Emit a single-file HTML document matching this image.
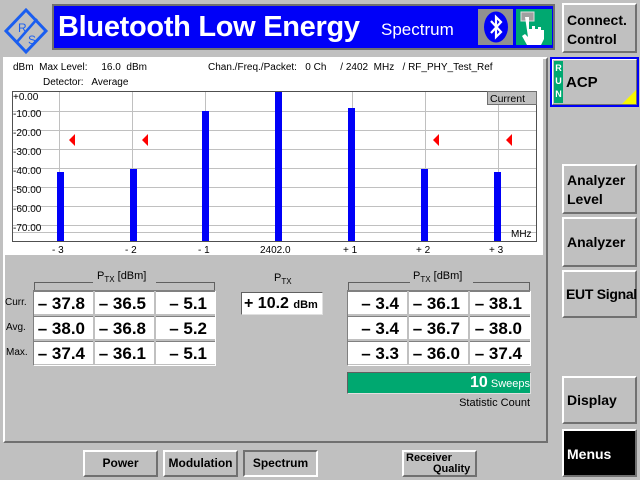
<!DOCTYPE html>
<html><head><meta charset="utf-8"><style>
*{margin:0;padding:0;box-sizing:border-box}
body{width:640px;height:480px;background:#c0c0c0;position:relative;overflow:hidden;font-family:"Liberation Sans",sans-serif;color:#000}
.a{position:absolute}
.btn{position:absolute;background:#c0c0c0;border:2px solid;border-color:#fff #707070 #707070 #fff;font-weight:bold;font-size:14px;line-height:18px;padding:4px 2px;white-space:nowrap}
.bb{position:absolute;background:#c0c0c0;border:2px solid;border-color:#fff #707070 #707070 #fff;font-weight:bold;font-size:12px;text-align:center}
.lbl{position:absolute;font-size:10px}
.cell{position:absolute;background:#fff;height:23px;font-size:17px;font-weight:bold;text-align:right;padding-right:8px;line-height:23px;border-top:1px solid #808080}
.sub{font-size:8px;vertical-align:-3px}
</style></head><body>
<!-- logo -->
<svg class="a" style="left:3px;top:7px" width="46" height="48" viewBox="0 0 46 48">
<g fill="none" stroke="#1a5ef0" stroke-width="3"><path d="M23 3 L43 24 L23 45 L3 24 Z"/><path d="M13 36 L34 12" stroke-width="2.5"/></g>
<text x="15" y="25" font-size="12" fill="#1a5ef0" font-family="Liberation Sans">R</text>
<text x="25" y="37" font-size="12" fill="#1a5ef0" font-family="Liberation Sans">S</text>
</svg>
<!-- title -->
<div class="a" style="left:52px;top:4px;width:503px;height:46px;background:#707070"></div>
<div class="a" style="left:54px;top:6px;width:499px;height:42px;background:#0000f8"></div>
<div class="a" style="left:58px;top:9px;color:#fff;font-size:29px;font-weight:bold;line-height:36px;white-space:nowrap;letter-spacing:-0.3px">Bluetooth Low Energy</div>
<div class="a" style="left:381px;top:19px;color:#fff;font-size:17px;line-height:22px;white-space:nowrap">Spectrum</div>
<div class="a" style="left:478px;top:9px;width:35px;height:36px;background:#909090"></div>
<svg class="a" style="left:483px;top:11px" width="26" height="32" viewBox="0 0 26 32"><ellipse cx="13" cy="16" rx="12" ry="15.5" fill="#0000f8"/><path d="M8 10 L18 21 L13 26 L13 6 L18 11 L8 22" fill="none" stroke="#fff" stroke-width="2.2"/></svg>
<div class="a" style="left:516px;top:9px;width:36px;height:36px;background:#00a870"></div>
<svg class="a" style="left:516px;top:9px" width="36" height="36" viewBox="0 0 36 36"><rect x="5" y="3" width="13" height="9" fill="#a0a0a0" stroke="#e0e0e0"/><path d="M9 8 h4 v12 h3 v-3 h3 v3 h3 v-2 h3 v3 h3 v9 l-3 6 h-14 l-5 -9 l3 -2 l3 3 z" fill="#fff"/></svg>
<!-- right buttons -->
<div class="btn" style="left:562px;top:3px;width:75px;height:50px;padding:6px 3px;line-height:19px">Connect.<br>Control</div>
<div class="a" style="left:550px;top:57px;width:89px;height:50px;background:#0000f8"></div>
<div class="a" style="left:552px;top:59px;width:85px;height:46px;background:#c0c0c0;border:1px solid;border-color:#fff #707070 #707070 #fff"></div>
<div class="a" style="left:554px;top:61px;width:9px;height:42px;background:#00a870;color:#fff;font-size:9px;font-weight:bold;line-height:13px;text-align:center;padding-top:1px">R<br>U<br>N</div>
<div class="a" style="left:566px;top:74px;font-size:15px;font-weight:bold">ACP</div>
<svg class="a" style="left:622px;top:90px" width="14" height="14"><path d="M14 0 L14 14 L0 14 Z" fill="#f8f800"/></svg>
<div class="btn" style="left:562px;top:164px;width:75px;height:50px;line-height:19px;padding:5px 3px">Analyzer<br>Level</div>
<div class="btn" style="left:562px;top:217px;width:75px;height:50px;padding:14px 3px">Analyzer</div>
<div class="btn" style="left:562px;top:270px;width:75px;height:48px;padding:13px 2px;letter-spacing:-0.3px">EUT Signal</div>
<div class="btn" style="left:562px;top:376px;width:75px;height:48px;padding:13px 3px">Display</div>
<div class="a" style="left:562px;top:429px;width:75px;height:48px;background:#000;color:#fff;font-weight:bold;font-size:14px;padding:15px 3px;border:2px solid #707070;border-left-color:#fff;border-top-color:#fff">Menus</div>
<!-- main panel -->
<div class="a" style="left:3px;top:57px;width:545px;height:386px;border:2px solid;border-color:#fff #707070 #707070 #fff"></div>
<div class="a" style="left:5px;top:59px;width:538px;height:196px;background:#fff"></div>
<div class="lbl" style="left:13px;top:62px;white-space:pre">dBm  Max Level:     16.0  dBm</div>
<div class="lbl" style="left:43px;top:77px;white-space:pre">Detector:   Average</div>
<div class="lbl" style="left:208px;top:62px;white-space:pre">Chan./Freq./Packet:   0 Ch     / 2402  MHz   / RF_PHY_Test_Ref</div>
<svg class="a" style="left:0;top:85px" width="545" height="172">
<g stroke="#c0c0c0" stroke-width="1">
<path d="M12.5 26.5H536 M12.5 45.5H536 M12.5 64.5H536 M12.5 83.5H536 M12.5 102.5H536 M12.5 121.5H536 M12.5 140.5H536 M12.5 147.5H536"/>
<path d="M59.5 6V156 M132.5 6V156 M205.5 6V156 M279.5 6V156 M352.5 6V156 M425.5 6V156 M498.5 6V156"/>
</g>
<path d="M12.5 6.5H536.5V156.5H12.5Z" fill="none" stroke="#505050"/>
<g fill="#0000f8">
<rect x="57" y="87" width="7" height="69"/><rect x="130" y="84" width="7" height="72"/><rect x="202" y="26" width="7" height="130"/><rect x="275" y="7" width="7" height="149"/><rect x="348" y="23" width="7" height="133"/><rect x="421" y="84" width="7" height="72"/><rect x="494" y="87" width="7" height="69"/>
</g>
<g fill="#f00"><path d="M69 55 L75 49 V61Z M142 55 L148 49 V61Z M433 55 L439 49 V61Z M506 55 L512 49 V61Z"/></g>
<rect x="487.5" y="6.5" width="49" height="13" fill="#c0c0c0" stroke="#707070"/>
<text x="490" y="17" font-size="10.5" font-family="Liberation Sans">Current</text>
<g font-size="10" font-family="Liberation Sans"><text x="13" y="15">+0.00</text><text x="13" y="32">-10.00</text><text x="13" y="51">-20.00</text><text x="13" y="70">-30.00</text><text x="13" y="89">-40.00</text><text x="13" y="108">-50.00</text><text x="13" y="127">-60.00</text><text x="13" y="146">-70.00</text>
<text x="511" y="152">MHz</text>
<text x="52" y="168">- 3</text><text x="125" y="168">- 2</text><text x="198" y="168">- 1</text><text x="260" y="168">2402.0</text><text x="343" y="168">+ 1</text><text x="416" y="168">+ 2</text><text x="489" y="168">+ 3</text></g>
</svg>
<!-- left table -->
<svg class="a" style="left:0;top:265px" width="545" height="30"><g fill="none" stroke="#606060"><path d="M34.5 25V17.5H93 M156 17.5H214.5V25"/><path d="M348.5 25V17.5H410 M473 17.5H529.5V25"/></g></svg>
<div class="lbl" style="left:97px;top:270px;font-size:11px">P<span class="sub">TX</span> [dBm]</div>
<div class="lbl" style="left:413px;top:270px;font-size:11px">P<span class="sub">TX</span> [dBm]</div>
<div class="lbl" style="left:274px;top:272px;font-size:11px">P<span class="sub">TX</span></div>
<div class="a" style="left:33px;top:290px;width:183px;height:76px;background:#c0c0c0;border:1px solid;border-color:#808080 #fff #fff #808080"></div>
<div class="lbl" style="left:5px;top:297px;font-size:10px">Curr.</div>
<div class="lbl" style="left:6px;top:322px;font-size:10px">Avg.</div>
<div class="lbl" style="left:6px;top:347px;font-size:10px">Max.</div>
<div class="cell" style="left:34px;top:291px;width:59px">– 37.8</div><div class="cell" style="left:95px;top:291px;width:59px">– 36.5</div><div class="cell" style="left:156px;top:291px;width:59px">– 5.1</div>
<div class="cell" style="left:34px;top:316px;width:59px">– 38.0</div><div class="cell" style="left:95px;top:316px;width:59px">– 36.8</div><div class="cell" style="left:156px;top:316px;width:59px">– 5.2</div>
<div class="cell" style="left:34px;top:341px;width:59px">– 37.4</div><div class="cell" style="left:95px;top:341px;width:59px">– 36.1</div><div class="cell" style="left:156px;top:341px;width:59px">– 5.1</div>
<div class="a" style="left:241px;top:292px;width:82px;height:23px;background:#fff;border:1px solid;border-color:#606060 #e0e0e0 #e0e0e0 #606060;font-size:16px;font-weight:bold;line-height:21px;padding-left:2px;white-space:nowrap">+ 10.2 <span style="font-size:11px">dBm</span></div>
<!-- right table -->
<div class="a" style="left:347px;top:290px;width:184px;height:76px;background:#c0c0c0;border:1px solid;border-color:#808080 #fff #fff #808080"></div>
<div class="cell" style="left:348px;top:291px;width:59px">– 3.4</div><div class="cell" style="left:409px;top:291px;width:59px">– 36.1</div><div class="cell" style="left:470px;top:291px;width:60px">– 38.1</div>
<div class="cell" style="left:348px;top:316px;width:59px">– 3.4</div><div class="cell" style="left:409px;top:316px;width:59px">– 36.7</div><div class="cell" style="left:470px;top:316px;width:60px">– 38.0</div>
<div class="cell" style="left:348px;top:341px;width:59px">– 3.3</div><div class="cell" style="left:409px;top:341px;width:59px">– 36.0</div><div class="cell" style="left:470px;top:341px;width:60px">– 37.4</div>
<div class="a" style="left:347px;top:372px;width:184px;height:22px;background:#00a870;border:1px solid;border-color:#606060 #e0e0e0 #e0e0e0 #606060;color:#fff;text-align:right;line-height:20px;font-size:11px;white-space:nowrap"><b style="font-size:16px">10</b> Sweeps</div>
<div class="lbl" style="left:400px;top:397px;width:130px;text-align:right;font-size:11px">Statistic Count</div>
<!-- bottom buttons -->
<div class="bb" style="left:83px;top:450px;width:75px;height:27px;line-height:23px">Power</div>
<div class="bb" style="left:163px;top:450px;width:75px;height:27px;line-height:23px">Modulation</div>
<div class="bb" style="left:243px;top:450px;width:75px;height:27px;line-height:23px;border-color:#707070 #fff #fff #707070">Spectrum</div>
<div class="bb" style="left:402px;top:450px;width:75px;height:27px;line-height:11px;text-align:left;padding:1px 2px;font-size:11px">Receiver<br><span style="margin-left:27px">Quality</span></div>
</body></html>
